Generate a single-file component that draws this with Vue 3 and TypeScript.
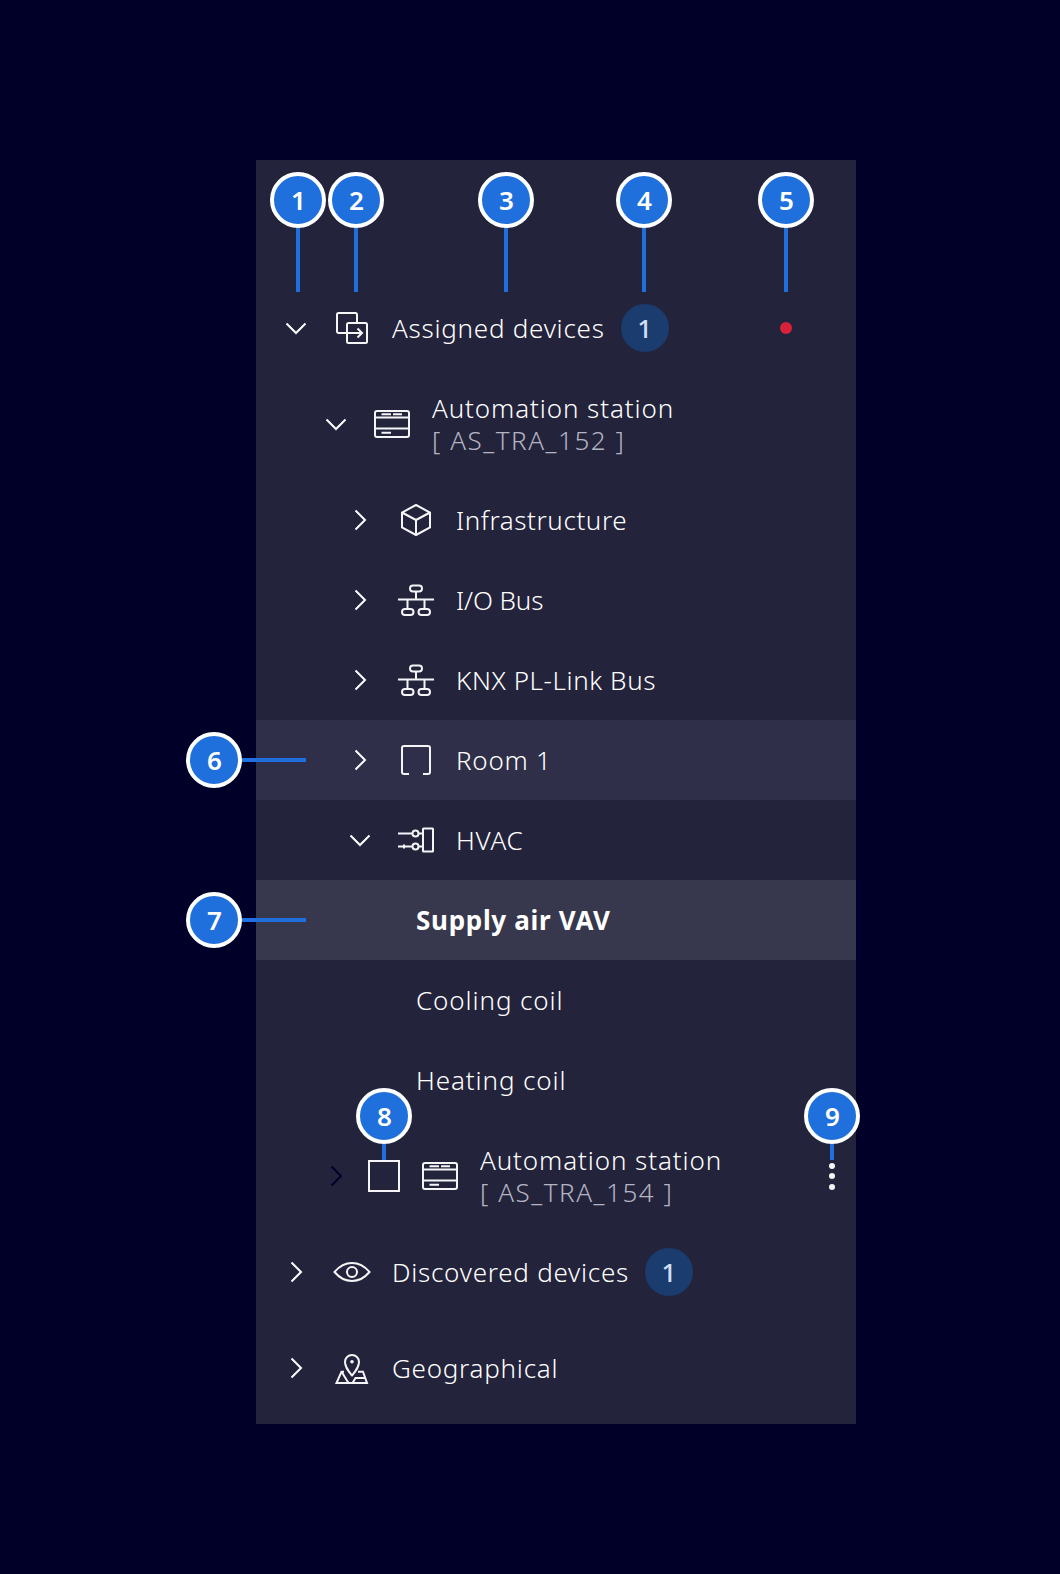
<script setup lang="ts">
const marks = [
  { n: 1, x: 298, y: 200, line: 'v', l: 64 },
  { n: 2, x: 356, y: 200, line: 'v', l: 64 },
  { n: 3, x: 506, y: 200, line: 'v', l: 64 },
  { n: 4, x: 644, y: 200, line: 'v', l: 64 },
  { n: 5, x: 786, y: 200, line: 'v', l: 64 },
  { n: 6, x: 214, y: 760, line: 'h', l: 64 },
  { n: 7, x: 214, y: 920, line: 'h', l: 64 },
  { n: 8, x: 384, y: 1116, line: 'v', l: 16 },
  { n: 9, x: 832, y: 1116, line: 'v', l: 16 },
]
</script>

<template>
  <main class="page">
    <section class="panel">
      <div class="row tall l0">
        <svg class="chev" viewBox="0 0 32 32"><path d="M6.500 11.500l9.500 9.500 9.500-9.500" /></svg>
        <svg class="ico" viewBox="0 0 40 40"><path d="M15 25H6.500A1.500 1.500 0 0 1 5 23.500V6.500A1.500 1.500 0 0 1 6.500 5h17A1.500 1.500 0 0 1 25 6.500V15" /><rect x="15" y="15" width="20" height="20" rx="1.500" /><path d="M14 25h16M25.500 20.500l4.500 4.500-4.500 4.500" /></svg>
        <span class="label">Assigned devices</span>
        <span class="badge">1</span>
        <span class="dot"></span>
      </div>

      <div class="row tall l1">
        <svg class="chev" viewBox="0 0 32 32"><path d="M6.500 11.500l9.500 9.500 9.500-9.500" /></svg>
        <svg class="ico" viewBox="0 0 40 40"><rect x="3" y="7" width="34" height="26" rx="2" /><path d="M3 13.500h34M3 24.500h34M9.500 10.300H19M21 10.300h9M9.500 28.800H19" /></svg>
        <div class="stack"><span>Automation station</span><span class="sub">[ AS_TRA_152 ]</span></div>
      </div>

      <div class="group">
        <div class="row l2">
          <svg class="chev" viewBox="0 0 32 32"><path d="M11.500 6.500l9.500 9.500-9.500 9.500" /></svg>
          <svg class="ico" viewBox="0 0 40 40"><path d="M20 5l14 7.500v15L20 35 6 27.500v-15zM6 12.500L20 20l14-7.500M20 20v15" /></svg>
          <span class="label snug">Infrastructure</span>
        </div>
        <div class="row l2">
          <svg class="chev" viewBox="0 0 32 32"><path d="M11.500 6.500l9.500 9.500-9.500 9.500" /></svg>
          <svg class="ico" viewBox="0 0 40 40"><rect x="14" y="5.500" width="12" height="6" rx="3" /><rect x="6" y="29" width="11.500" height="6" rx="3" /><rect x="22.500" y="29" width="11.500" height="6" rx="3" /><path d="M20 11.500v8M2 19.500h36M11.500 19.500V29M28.500 19.500V29" /></svg>
          <span class="label tight">I/O Bus</span>
        </div>
        <div class="row l2">
          <svg class="chev" viewBox="0 0 32 32"><path d="M11.500 6.500l9.500 9.500-9.500 9.500" /></svg>
          <svg class="ico" viewBox="0 0 40 40"><rect x="14" y="5.500" width="12" height="6" rx="3" /><rect x="6" y="29" width="11.500" height="6" rx="3" /><rect x="22.500" y="29" width="11.500" height="6" rx="3" /><path d="M20 11.500v8M2 19.500h36M11.500 19.500V29M28.500 19.500V29" /></svg>
          <span class="label snug">KNX PL-Link Bus</span>
        </div>
        <div class="row l2 hover">
          <svg class="chev" viewBox="0 0 32 32"><path d="M11.500 6.500l9.500 9.500-9.500 9.500" /></svg>
          <svg class="ico" viewBox="0 0 40 40"><path d="M13 34H8a2 2 0 0 1-2-2V8a2 2 0 0 1 2-2h24a2 2 0 0 1 2 2v24a2 2 0 0 1-2 2h-5" /></svg>
          <span class="label">Room 1</span>
        </div>
        <div class="row l2">
          <svg class="chev" viewBox="0 0 32 32"><path d="M6.500 11.500l9.500 9.500 9.500-9.500" /></svg>
          <svg class="ico" viewBox="0 0 40 40"><rect x="27" y="8.500" width="10" height="23" rx="0.500" /><circle cx="19.500" cy="13.500" r="3" /><circle cx="19.500" cy="26.500" r="3" /><path d="M2 13.500h14.500M22.500 13.500H27M2 26.500h14.500M22.500 26.500H27M8 24.500v4" /></svg>
          <span class="label">HVAC</span>
        </div>
        <div class="row l3 selected"><span class="label strong">Supply air VAV</span></div>
        <div class="row l3"><span class="label wide">Cooling coil</span></div>
        <div class="row l3"><span class="label wide">Heating coil</span></div>
      </div>

      <div class="row tall l1">
        <svg class="chev dark" viewBox="0 0 32 32"><path d="M11.500 6.500l9.500 9.500-9.500 9.500" /></svg>
        <span class="check"></span>
        <svg class="ico" viewBox="0 0 40 40"><rect x="3" y="7" width="34" height="26" rx="2" /><path d="M3 13.500h34M3 24.500h34M9.500 10.300H19M21 10.300h9M9.500 28.800H19" /></svg>
        <div class="stack"><span>Automation station</span><span class="sub">[ AS_TRA_154 ]</span></div>
        <span class="more"><i></i><i></i><i></i></span>
      </div>

      <div class="row tall l0">
        <svg class="chev" viewBox="0 0 32 32"><path d="M11.500 6.500l9.500 9.500-9.500 9.500" /></svg>
        <svg class="ico" viewBox="0 0 40 40"><path d="M2.500 20C8 13.500 13.500 11 20 11s12 2.500 17.500 9C32 26.500 26.500 29 20 29S8 26.500 2.500 20z" /><circle cx="20" cy="20" r="5" /></svg>
        <span class="label">Discovered devices</span>
        <span class="badge">1</span>
      </div>

      <div class="row tall l0">
        <svg class="chev" viewBox="0 0 32 32"><path d="M11.500 6.500l9.500 9.500-9.500 9.500" /></svg>
        <svg class="ico" viewBox="0 0 40 40"><path d="M20 27.500c-4-5-7-8.500-7-13.500a7 7 0 0 1 14 0c0 5-3 8.500-7 13.500z" /><circle cx="20" cy="13.700" r="1.800" class="fill" /><path d="M12 23.700H9.500L4.500 35h30.500l-4-11.300H26M9.700 24L16.500 35M20.500 35l3-5h9" /></svg>
        <span class="label">Geographical</span>
      </div>
    </section>

    <div v-for="m in marks" :key="m.n" class="mark" :style="{ left: m.x + 'px', top: m.y + 'px' }">
      <span :class="m.line === 'v' ? 'line-v' : 'line-h'" :style="m.line === 'v' ? { height: m.l + 'px' } : { width: m.l + 'px' }"></span>
      <span class="bubble">{{ m.n }}</span>
    </div>
  </main>
</template>

<style scoped>
.page {
  position: relative;
  box-sizing: border-box;
  width: 1060px;
  height: 1574px;
  padding: 160px 204px 150px 256px;
  background: #000028;
  font-family: "Noto Sans", "Open Sans", sans-serif;
  font-weight: 300;
  letter-spacing: 0.75px;
  color: #fff;
  font-size: 26px;
}
.panel {
  width: 600px;
  height: 1264px;
  box-sizing: border-box;
  padding-top: 120px;
  background: #23233c;
}
.group { padding: 8px 0; }
.row {
  display: flex;
  align-items: center;
  height: 80px;
}
.row.tall { height: 96px; }
.l0 { padding-left: 24px; }
.l1 { padding-left: 64px; }
.l2 { padding-left: 88px; }
.l3 { padding-left: 160px; }
.hover { background: #2f2f49; }
.selected { background: #37374d; }
.chev { width: 32px; height: 32px; flex: none; fill: none; stroke: #fff; stroke-width: 2; }
.chev.dark { stroke: #000028; }
.ico { width: 40px; height: 40px; flex: none; margin: 0 20px; fill: none; stroke: #f5f5f7; stroke-width: 2; }
.ico .fill { fill: #f5f5f7; stroke: none; }
.check { width: 28px; height: 28px; flex: none; margin-left: 16px; border: 2px solid #f5f5f7; }
.label { white-space: nowrap; }
.tight { letter-spacing: -0.1px; }
.snug { letter-spacing: 0.6px; }
.wide { letter-spacing: 0.9px; }
.strong { font-weight: 700; letter-spacing: 0.7px; }
.stack { display: flex; flex-direction: column; line-height: 32px; white-space: nowrap; letter-spacing: 0.9px; }
.sub { color: #b4b4c2; letter-spacing: 1.550px; }
.badge {
  width: 48px; height: 48px; flex: none; margin-left: 16px;
  display: flex; align-items: center; justify-content: center;
  border-radius: 50%; background: #1b3c6e; color: #cfe0f7; font-weight: 500; letter-spacing: 0;
}
.dot { width: 12px; height: 12px; flex: none; margin-left: auto; margin-right: 64px; border-radius: 50%; background: #d72339; }
.more { margin-left: auto; margin-right: 21px; flex: none; width: 6px; display: flex; flex-direction: column; gap: 4.500px; }
.more i { display: block; width: 6px; height: 6px; border-radius: 50%; background: #f5f5f7; }
.mark { position: absolute; width: 0; height: 0; }
.bubble {
  position: absolute; left: -28px; top: -28px; box-sizing: border-box;
  width: 56px; height: 56px; border: 4px solid #fff; border-radius: 50%; padding-left: 1px;
  background: #1f6fdc; color: #fff; font-weight: 600; font-size: 26px; letter-spacing: 0;
  display: flex; align-items: center; justify-content: center;
}
.line-v { position: absolute; left: -2px; top: 28px; width: 4px; background: #1f6fdc; }
.line-h { position: absolute; left: 28px; top: -2px; height: 4px; background: #1f6fdc; }
</style>

<style>
html, body { margin: 0; background: #000028; }
</style>
